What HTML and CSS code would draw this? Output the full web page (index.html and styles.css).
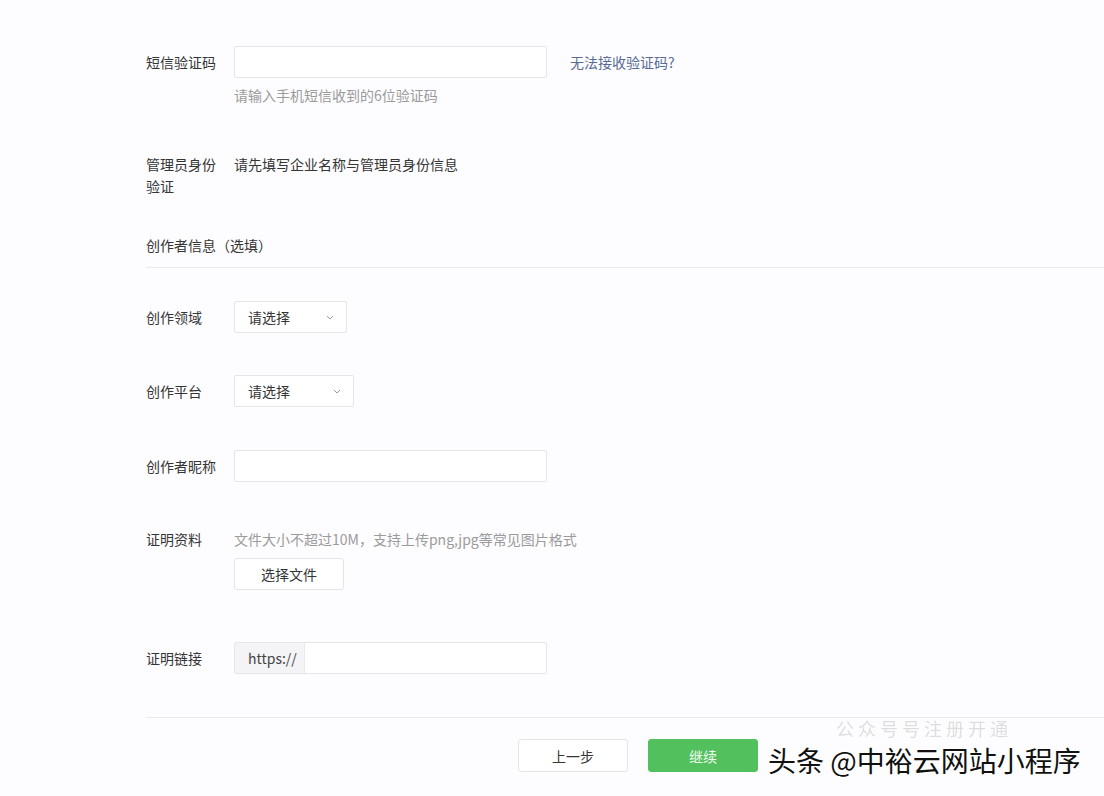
FILE: index.html
```html
<!DOCTYPE html>
<html lang="zh">
<head>
<meta charset="utf-8">
<title>创作者信息</title>
<link rel="stylesheet" href="styles.css">
</head>
<body>
<div class="page">
  <div class="row row-sms">
    <div class="label lh32">短信验证码</div>
    <div class="field">
      <div class="inline">
        <div class="input w313"></div>
        <a class="link">无法接收验证码?</a>
      </div>
      <div class="hint hint-under">请输入手机短信收到的6位验证码</div>
    </div>
  </div>

  <div class="row row-admin">
    <div class="label lh22 wrap">管理员身份验证</div>
    <div class="field text lh22">请先填写企业名称与管理员身份信息</div>
  </div>

  <div class="section-title">创作者信息（选填）</div>

  <div class="row row-domain">
    <div class="label lh32">创作领域</div>
    <div class="select w113"><span>请选择</span><svg class="arrow" viewBox="0 0 8 5" width="8" height="5"><path d="M1 1l3 3 3-3" fill="none" stroke="#9a9a9a" stroke-width="1"/></svg></div>
  </div>

  <div class="row row-platform">
    <div class="label lh32">创作平台</div>
    <div class="select w120"><span>请选择</span><svg class="arrow" viewBox="0 0 8 5" width="8" height="5"><path d="M1 1l3 3 3-3" fill="none" stroke="#9a9a9a" stroke-width="1"/></svg></div>
  </div>

  <div class="row row-nick">
    <div class="label lh32">创作者昵称</div>
    <div class="input w313"></div>
  </div>

  <div class="row row-proof">
    <div class="label lh20">证明资料</div>
    <div class="field">
      <div class="hint lh20">文件大小不超过10M，支持上传png,jpg等常见图片格式</div>
      <div class="btn file-btn">选择文件</div>
    </div>
  </div>

  <div class="row row-link">
    <div class="label lh32">证明链接</div>
    <div class="input w313 prefixed"><span class="prefix">https://</span></div>
  </div>

  <div class="footer">
    <div class="btn prev">上一步</div>
    <div class="btn primary">继续</div>
  </div>

  <div class="watermark">
    <span class="wm-faint">公众号号注册开通</span>
    <span class="wm-main">头条 @中裕云网站小程序</span>
  </div>
</div>
</body>
</html>
```
FILE: styles.css
```css
html, body {
  margin: 0;
  padding: 0;
  background: #fdfcfe;
}
body {
  font-family: "Noto Sans CJK SC", "Noto Sans", "Liberation Sans", sans-serif;
  font-size: 14px;
  color: #353535;
  width: 1104px;
  height: 796px;
  overflow: hidden;
}
.page {
  position: relative;
  padding-left: 146px;
  padding-top: 46px;
  height: 796px;
  box-sizing: border-box;
}
.row {
  display: flex;
  align-items: flex-start;
}
.label {
  width: 88px;
  flex: none;
  color: #353535;
}
.label.wrap { width: 76px; margin-right: 12px; }
.lh32 { line-height: 32px; }
.lh22 { line-height: 22px; }
.lh20 { line-height: 20px; }
.field { display: flex; flex-direction: column; }
.inline { display: flex; align-items: center; }
.input {
  height: 32px;
  box-sizing: border-box;
  border: 1px solid #e6e5ea;
  border-radius: 2px;
  background: #fff;
}
.w313 { width: 313px; }
.link {
  color: #576b95;
  margin-left: 23px;
  line-height: 32px;
}
.hint { color: #9b9b9b; }
.hint-under { margin-top: 8px; line-height: 18px; }
.text { color: #353535; }

.row-admin { margin-top: 49px; }
.section-title {
  margin-top: 37px;
  line-height: 22px;
  padding-bottom: 11px;
  border-bottom: 1px solid #ebeaee;
}
.row-domain { margin-top: 33px; }
.row-platform { margin-top: 42px; }
.row-nick { margin-top: 43px; }
.row-proof { margin-top: 47px; }
.row-link { margin-top: 52px; }

.select {
  height: 32px;
  box-sizing: border-box;
  border: 1px solid #e6e5ea;
  border-radius: 2px;
  background: #fff;
  display: flex;
  align-items: center;
  justify-content: space-between;
  padding: 0 12px 0 13px;
  color: #353535;
}
.w113 { width: 113px; }
.w120 { width: 120px; }
.arrow { display: block; }

.btn {
  box-sizing: border-box;
  height: 32px;
  border: 1px solid #e4e3e8;
  border-radius: 3px;
  background: #fff;
  display: flex;
  align-items: center;
  justify-content: center;
  color: #353535;
}
.file-btn { width: 110px; margin-top: 9px; }

.prefixed { display: flex; overflow: hidden; }
.prefix {
  width: 70px;
  background: #f4f3f6;
  border-right: 1px solid #ebeaee;
  line-height: 30px;
  padding-left: 13px;
  box-sizing: border-box;
  color: #454545;
}

.footer {
  margin-top: 43px;
  border-top: 1px solid #ebeaee;
  padding-top: 21px;
  padding-left: 372px;
  display: flex;
  gap: 20px;
}
.prev { width: 110px; height: 33px; }
.primary {
  width: 110px;
  height: 33px;
  background: #52c15d;
  border-color: #52c15d;
  color: #eef9ef;
}

.watermark {
  position: absolute;
  left: 768px;
  top: 722px;
  width: 336px;
  height: 70px;
}
.wm-faint {
  position: absolute;
  left: 68px;
  top: -4px;
  font-size: 18px;
  line-height: 20px;
  letter-spacing: 4px;
  color: rgba(0,0,0,0.14);
  white-space: nowrap;
}
.wm-main {
  position: absolute;
  left: 0;
  top: 20px;
  font-size: 28px;
  line-height: 36px;
  color: #111;
  white-space: nowrap;
  letter-spacing: 0;
  text-shadow: 1px 1px 0 #fff, -1px -1px 0 #fff, 1px -1px 0 #fff, -1px 1px 0 #fff;
}
```
